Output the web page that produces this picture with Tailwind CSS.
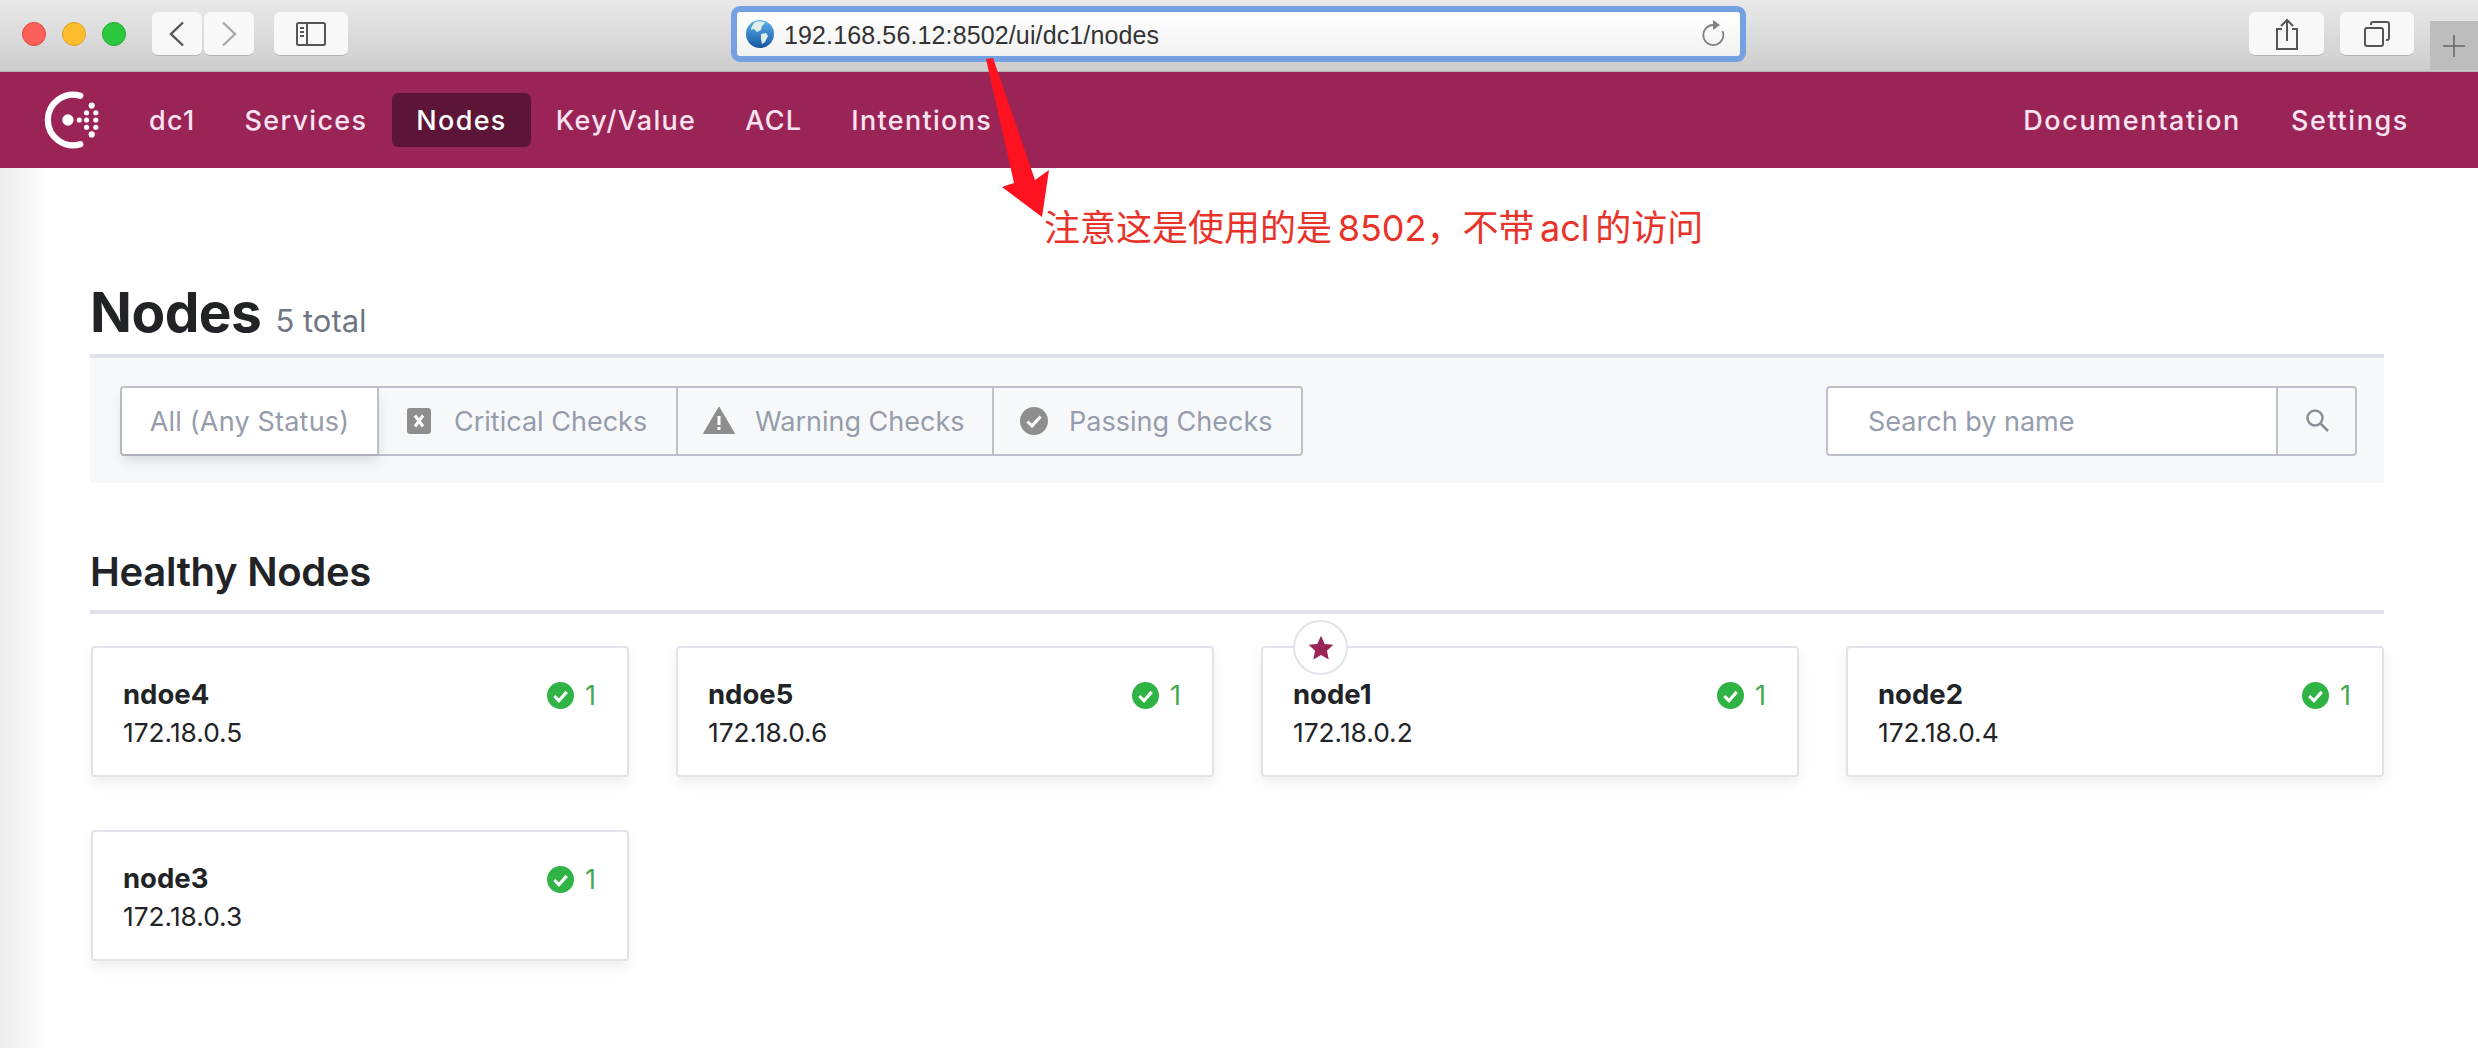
<!DOCTYPE html>
<html lang="en">
<head>
  <meta charset="UTF-8" />
  <title>Nodes - Consul</title>
  <script src="https://cdn.jsdelivr.net/npm/@tailwindcss/browser@4"></script>
</head>
<body class="relative h-[1048px] overflow-hidden bg-white font-['Inter','Noto_Sans_CJK_SC',sans-serif] text-[#212327]">

  <!-- Browser toolbar -->
  <header class="relative flex h-[72px] items-start border-b border-[#b4b4b4] bg-gradient-to-b from-[#e9e9e9] to-[#cdcdcd] pt-[12px]">
    <div class="ml-[22px] mt-[10px] flex gap-[16px]">
      <span class="h-[24px] w-[24px] rounded-full border border-[#e0443e] bg-[#fc6058]"></span>
      <span class="h-[24px] w-[24px] rounded-full border border-[#dea123] bg-[#fdbc2e]"></span>
      <span class="h-[24px] w-[24px] rounded-full border border-[#1aab29] bg-[#2bc840]"></span>
    </div>
    <div class="ml-[26px] flex gap-[2px]">
      <button class="flex h-[44px] w-[50px] items-center justify-center rounded-[6px] border-b border-[#b5b5b5] bg-[#f8f8f8]">
        <svg width="18" height="26" viewBox="0 0 18 26" fill="none" stroke="#555" stroke-width="2.4"><path d="M15 1.500 3 13l12 11.500"/></svg>
      </button>
      <button class="flex h-[44px] w-[50px] items-center justify-center rounded-[6px] border-b border-[#b5b5b5] bg-[#f8f8f8]">
        <svg width="18" height="26" viewBox="0 0 18 26" fill="none" stroke="#aaa" stroke-width="2.400"><path d="M3 1.500 15 13 3 24.500"/></svg>
      </button>
    </div>
    <button class="ml-[20px] flex h-[44px] w-[74px] items-center justify-center rounded-[6px] border-b border-[#b5b5b5] bg-[#f8f8f8]">
      <svg width="30" height="24" viewBox="0 0 30 24" fill="none" stroke="#555" stroke-width="2"><rect x="1" y="1" width="28" height="22" rx="1.500"/><path d="M11 1v22"/><path d="M4 6h4M4 10h4M4 14h4" stroke-width="2"/></svg>
    </button>

    <!-- Address bar -->
    <div class="ml-[383px] -mt-[6px] flex h-[56px] w-[1015px] items-center rounded-[9px] border-[6px] border-[#74a1e2] bg-gradient-to-b from-white to-[#f2f2f2] pl-[9px] pr-[14px]">
      <svg width="28" height="28" viewBox="0 0 28 28">
        <defs><linearGradient id="sea" x1="0" y1="0" x2="0" y2="1"><stop offset="0" stop-color="#5fb2ee"/><stop offset="1" stop-color="#14569f"/></linearGradient></defs>
        <circle cx="14" cy="14" r="14" fill="url(#sea)"/>
        <path d="M9 2c4-1 8-1 10 1l-3 3-1 4-4 2-3-3-3 1c0-3 2-6 4-8zM15 14l5-1 2 3-3 6-3 2-1-5z" fill="#dfeee8"/>
      </svg>
      <span class="ml-[10px] mt-[2px] text-[25px] leading-none tracking-[0.13px] text-[#333] font-['Liberation_Sans',sans-serif]">192.168.56.12:8502/ui/dc1/nodes</span>
      <svg class="ml-auto" width="24" height="28" viewBox="0 0 24 28" fill="none" stroke="#808080" stroke-width="1.800"><path d="M11 5A10 10 0 1 0 20.500 11"/><path d="M11 0l7 5-7 5z" fill="#808080" stroke="none"/></svg>
    </div>

    <button class="ml-[503px] flex h-[44px] w-[75px] items-center justify-center rounded-[6px] border-b border-[#b5b5b5] bg-[#f8f8f8]">
      <svg width="24" height="32" viewBox="0 0 24 32" fill="none" stroke="#555" stroke-width="2"><path d="M7 11H2v20h20V11h-5"/><path d="M12 23V2M6 8l6-6 6 6"/></svg>
    </button>
    <button class="ml-[16px] flex h-[44px] w-[74px] items-center justify-center rounded-[6px] border-b border-[#b5b5b5] bg-[#f8f8f8]">
      <svg width="26" height="26" viewBox="0 0 26 26" fill="none" stroke="#555" stroke-width="2"><rect x="1" y="7" width="18" height="18" rx="2"/><path d="M7 4V3a2 2 0 0 1 2-2h14a2 2 0 0 1 2 2v14a2 2 0 0 1-2 2h-1"/></svg>
    </button>
    <div class="absolute bottom-[1px] right-0 flex h-[49px] w-[48px] items-center justify-center bg-[#bdbdbd]">
      <svg width="24" height="24" viewBox="0 0 24 24" stroke="#666" stroke-width="1.500"><path d="M12 1v22M1 12h22"/></svg>
    </div>
  </header>

  <!-- Consul nav -->
  <nav class="flex h-[96px] items-center bg-[#9b2457] text-[27px] font-medium tracking-[1.3px] text-[#f9e3f0]">
    <svg class="ml-[39px]" width="62" height="58" viewBox="0 0 60 56" fill="none">
      <path d="M40 4.500A24.500 24.500 0 1 0 40 51.500" stroke="#fff" stroke-width="6" stroke-linecap="round"/>
      <g fill="#fff">
        <circle cx="28" cy="28" r="5.500"/><circle cx="39" cy="28" r="2.500"/>
        <circle cx="51" cy="14" r="3"/><circle cx="51" cy="42" r="3"/>
        <circle cx="46" cy="21" r="2.500"/><circle cx="55" cy="21" r="2.500"/>
        <circle cx="46" cy="28" r="2.500"/><circle cx="55" cy="28" r="2.500"/>
        <circle cx="46" cy="35" r="2.500"/><circle cx="55" cy="35" r="2.500"/>
      </g>
    </svg>
    <ul class="ml-[24px] flex gap-[1px]">
      <li><a class="flex h-[54px] items-center rounded-[6px] px-[24px] pt-[2px]">dc1</a></li>
      <li><a class="flex h-[54px] items-center rounded-[6px] px-[24px] pt-[2px]">Services</a></li>
      <li><a class="flex h-[54px] items-center rounded-[6px] bg-[#5c1537] px-[24px] pt-[2px] text-white">Nodes</a></li>
      <li><a class="flex h-[54px] items-center rounded-[6px] px-[24px] pt-[2px]">Key/Value</a></li>
      <li><a class="flex h-[54px] items-center rounded-[6px] px-[24px] pt-[2px]">ACL</a></li>
      <li><a class="flex h-[54px] items-center rounded-[6px] px-[24px] pt-[2px]">Intentions</a></li>
    </ul>
    <ul class="ml-auto mr-[45px] flex gap-[2px] tracking-[1.6px]">
      <li><a class="flex h-[54px] items-center rounded-[6px] px-[24px] pt-[2px]">Documentation</a></li>
      <li><a class="flex h-[54px] items-center rounded-[6px] px-[24px] pt-[2px]">Settings</a></li>
    </ul>
  </nav>

  <!-- Page content -->
  <main class="relative h-[880px] pl-[90px] pr-[94px]">
    <div class="absolute inset-y-0 left-0 w-[48px] bg-gradient-to-r from-[#ececec] to-white"></div>

    <div class="relative flex h-[190px] items-baseline gap-[14px] border-b-4 border-[#dfe1e8] pt-[117px]">
      <h1 class="text-[55px] font-bold leading-none tracking-[-0.5px]">Nodes</h1>
      <span class="text-[31px] leading-none text-[#6f7683]">5 total</span>
    </div>

    <!-- Filter bar -->
    <div class="relative flex h-[125px] items-start justify-between bg-[#f7f8fa] pl-[30px] pr-[27px] pt-[28px] text-[27px] text-[#959cab]">
      <div class="flex h-[70px] rounded-[4px] border-2 border-[#bcc0ca]">
        <div class="flex w-[257px] items-center justify-center rounded-l-[3px] border-r-2 border-[#bcc0ca] bg-white pt-[2px] tracking-[0.2px] shadow-[0_8px_12px_rgba(0,0,0,0.1)]">All (Any Status)</div>
        <div class="flex w-[299px] items-center border-r-2 border-[#bcc0ca] pl-[28px]">
          <svg width="24" height="26" viewBox="0 0 24 26"><rect width="24" height="26" rx="3" fill="#8e8e8e"/><path d="M8 7.500l8 11M16 7.500l-8 11" stroke="#fff" stroke-width="3"/></svg>
          <span class="ml-[23px] mt-[2px]">Critical Checks</span>
        </div>
        <div class="flex w-[316px] items-center border-r-2 border-[#bcc0ca] pl-[25px]">
          <svg class="-mt-[2px]" width="32" height="28" viewBox="0 0 32 28"><path d="M16 1 31.500 27.500H.5z" fill="#8e8e8e" stroke="#8e8e8e" stroke-linejoin="round"/><path d="M16 10v9M16 21v3" stroke="#fff" stroke-width="3"/></svg>
          <span class="ml-[20px] mt-[2px]">Warning Checks</span>
        </div>
        <div class="flex w-[307px] items-center pl-[26px]">
          <svg width="28" height="28" viewBox="0 0 28 28"><circle cx="14" cy="14" r="14" fill="#8e8e8e"/><path d="M7.500 14.500l4.500 4.500 8.500-9.500" fill="none" stroke="#fff" stroke-width="3"/></svg>
          <span class="ml-[21px] mt-[2px]">Passing Checks</span>
        </div>
      </div>
      <div class="flex h-[70px] w-[531px] rounded-[4px] border-2 border-[#bcc0ca]">
        <div class="flex flex-1 items-center rounded-l-[3px] bg-white pl-[40px] pt-[2px]">Search by name</div>
        <div class="flex w-[79px] items-center justify-center border-l-2 border-[#bcc0ca]">
          <svg class="-mt-[2px]" width="24" height="24" viewBox="0 0 24 24" fill="none" stroke="#8b8f97" stroke-width="2.500"><circle cx="10" cy="10" r="7.500"/><path d="M15.500 15.500 23 23"/></svg>
        </div>
      </div>
    </div>

    <!-- Healthy nodes -->
    <h2 class="relative flex h-[131px] items-end border-b-4 border-[#dfe1e8] pb-[18px] text-[40px] font-semibold leading-none tracking-[-0.3px]">Healthy Nodes</h2>

    <div id="cards" class="relative ml-[1px] mt-[32px] grid grid-cols-4 gap-x-[47px] gap-y-[53px]"></div>

    <!-- template for one node card -->
    <template id="card">
      <div class="relative flex h-[131px] items-start justify-between rounded-[4px] border-2 border-[#e1e3ea] bg-white pl-[30px] pr-[31px] pt-[29px] shadow-[0_6px_14px_rgba(0,0,0,0.07)]">
        <div class="star absolute -top-[28px] left-[30px] hidden h-[55px] w-[55px] items-center justify-center rounded-full border-2 border-[#e1e3ea] bg-white">
          <svg width="26" height="26" viewBox="0 0 24 24"><path d="M12 .8l3.400 7.400 8 .9-5.900 5.400 1.600 8L12 18.500l-7.100 4 1.600-8L.6 9.100l8-.9z" fill="#9b2457"/></svg>
        </div>
        <div>
          <div class="name text-[27.5px] font-bold leading-[34px]"></div>
          <div class="ip mt-[5px] text-[26.3px] leading-[34px]"></div>
        </div>
        <div class="flex items-center gap-[11px] text-[27px] leading-[34px] text-[#45a84f]">
          <svg width="27" height="27" viewBox="0 0 26 26"><circle cx="13" cy="13" r="13" fill="#2fb344"/><path d="M7 13.500l4.500 4.500L19 9.500" fill="none" stroke="#fff" stroke-width="3"/></svg>
          <span class="mt-[2px]">1</span>
        </div>
      </div>
    </template>
  </main>

  <!-- Red annotation drawn over the screenshot -->
  <svg class="absolute left-0 top-0" width="2478" height="260" viewBox="0 0 2478 260">
    <path d="M986 59 993 58 1035 180 1049 170 1042 217 1002 187 1014 183z" fill="#fe1220"/>
  </svg>
  <p class="absolute left-[1044px] top-[204px] whitespace-nowrap text-[36px] leading-[48px] text-[#e8332a] [word-spacing:-4.500px]">注意这是使用的是 8502，不带 acl 的访问</p>

  <script>
    const nodes = [
      { name: 'ndoe4', ip: '172.18.0.5' },
      { name: 'ndoe5', ip: '172.18.0.6' },
      { name: 'node1', ip: '172.18.0.2', leader: true },
      { name: 'node2', ip: '172.18.0.4' },
      { name: 'node3', ip: '172.18.0.3' }
    ];

    const cards = document.getElementById('cards');
    const tpl = document.getElementById('card');
    nodes.forEach(n => {
      const el = tpl.content.cloneNode(true);
      el.querySelector('.name').textContent = n.name;
      el.querySelector('.ip').textContent = n.ip;
      if (n.leader) {
        const star = el.querySelector('.star');
        star.classList.remove('hidden');
        star.classList.add('flex');
      }
      cards.appendChild(el);
    });
  </script>
</body>
</html>
